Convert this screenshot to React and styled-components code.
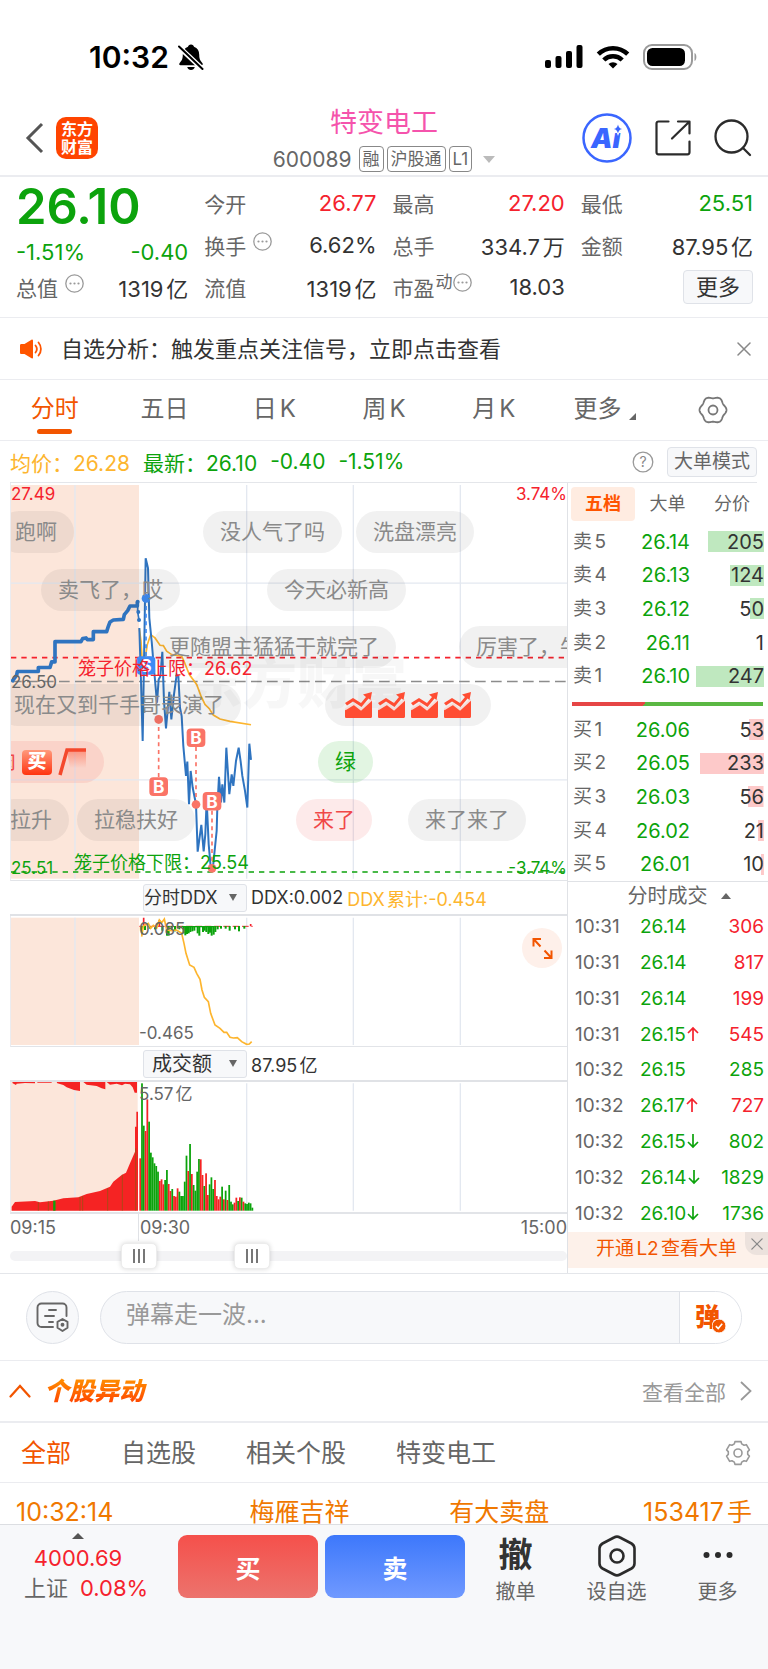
import React from "react";
import styled, { createGlobalStyle, css } from "styled-components";

const C = {
  green: "#0ca30c",
  red: "#f5222d",
  orange: "#f25500",
  amber: "#fdb52e",
  text: "#333333",
  mid: "#666666",
  soft: "#999999",
  line: "#ebecf0",
  panel: "#f7f8fa",
  blue: "#2f74c0",
  peach: "#fce6da",
};

const tone = (t) => C[t] || C.text;

const Global = createGlobalStyle`
  *, *::before, *::after { box-sizing: border-box; }
  html, body { margin: 0; padding: 0; background: #fff; }
  body {
    font-family: Inter, "Noto Sans CJK SC", sans-serif;
    font-size: 20px;
    color: ${C.text};
    text-autospace: normal;
  }
  button, input, select { font-family: inherit; color: inherit; }
  button { border: 0; padding: 0; background: none; cursor: pointer; }
  svg { display: block; flex: none; }
  a { text-decoration: none; color: inherit; }
`;

const Page = styled.main`
  width: 100%;
  overflow: hidden;
`;

/* ---------- status bar ---------- */
const StatusBar = styled.div`
  display: flex;
  align-items: center;
  justify-content: space-between;
  height: 96px;
  padding: 18px 70px 0 89px;
`;
const StatusSide = styled.div`
  display: flex;
  align-items: center;
  gap: ${(p) => p.$gap}px;
`;
const Clock = styled.time`
  font-size: 30px;
  font-weight: 600;
  line-height: 36px;
  color: #000;
`;

/* ---------- header ---------- */
const Header = styled.header`
  display: grid;
  grid-template-columns: 1fr auto 1fr;
  align-items: center;
  height: 81px;
  padding: 2px 16px 0;
  border-bottom: 2px solid ${C.line};
`;
const HeaderLeft = styled.div`
  display: flex;
  align-items: center;
  gap: 12px;
  padding-left: 9px;
`;
const IconButton = styled.button`
  display: grid;
  place-items: center;
`;
const Logo = styled.a`
  display: grid;
  place-items: center;
  width: 42px;
  height: 42px;
  border-radius: 10px;
  background: #ff4400;
  color: #fff;
  font-size: 16px;
  font-weight: 700;
  line-height: 18px;
  text-align: center;
`;
const TitleBlock = styled.div`
  display: flex;
  flex-direction: column;
  align-items: center;
  padding-top: 7px;
`;
const StockName = styled.h1`
  margin: 0;
  font-size: 27px;
  font-weight: 400;
  line-height: 36px;
  color: #f553ac;
`;
const CodeLine = styled.div`
  display: flex;
  align-items: center;
  gap: 3px;
  height: 36px;
  font-size: 21px;
  color: ${C.mid};
`;
const Code = styled.span`
  margin-right: 4px;
`;
const Badge = styled.span`
  height: 26px;
  padding: 0 3px;
  border: 1px solid #888;
  border-radius: 4px;
  font-size: 17px;
  line-height: 24px;
`;
const Triangle = styled.i`
  display: inline-block;
  margin: ${(p) => p.$m || "0"};
  border: ${(p) => p.$w}px solid transparent;
  ${(p) =>
    p.$up
      ? css`border-top: 0; border-bottom: ${p.$h}px solid ${p.$c};`
      : css`border-bottom: 0; border-top: ${p.$h}px solid ${p.$c};`}
`;
const HeaderRight = styled.div`
  display: flex;
  align-items: center;
  justify-content: flex-end;
  gap: 23px;
`;

/* ---------- quote ---------- */
const Quote = styled.section`
  display: grid;
  grid-template-columns: repeat(4, 1fr);
  column-gap: 16px;
  padding: 5px 15px 9px 16px;
  border-bottom: 1px solid ${C.line};
`;
const QuoteCol = styled.dl`
  margin: 0;
`;
const Price = styled.div`
  height: 50px;
  font-size: 49px;
  font-weight: 600;
  line-height: 50px;
  color: ${C.green};
`;
const Change = styled.div`
  display: flex;
  align-items: flex-end;
  justify-content: space-between;
  height: 34px;
  font-size: 22px;
  line-height: 28px;
  color: ${C.green};
`;
const Stat = styled.div`
  display: flex;
  align-items: center;
  justify-content: space-between;
  height: 42px;
`;
const StatLabel = styled.dt`
  display: flex;
  align-items: center;
  gap: 7px;
  font-size: 21px;
  color: ${C.mid};
  white-space: nowrap;
`;
const StatValue = styled.dd`
  margin: 0;
  font-size: 22px;
  color: ${(p) => tone(p.$tone)};
  white-space: nowrap;
`;
const Raised = styled.span`
  display: flex;
  align-items: center;
  margin-left: -6px;
  padding-bottom: 10px;
  font-size: 17px;
  line-height: 18px;
`;
const RaisedDots = styled.span`
  padding-bottom: 8px;
`;
const SmallButton = styled.button`
  width: ${(p) => p.$w}px;
  height: ${(p) => p.$h}px;
  border: 1px solid #dfe2e8;
  border-radius: 4px;
  background: ${C.panel};
  font-size: ${(p) => p.$size}px;
  line-height: 28px;
  color: ${(p) => p.$c || C.text};
`;

/* ---------- notice ---------- */
const Notice = styled.section`
  display: flex;
  align-items: center;
  height: 62px;
  padding: 0 17px 0 19px;
  border-bottom: 1px solid ${C.line};
`;
const NoticeText = styled.p`
  flex: 1;
  margin: 0 0 0 18px;
  font-size: 22px;
  line-height: 30px;
`;

/* ---------- period tabs ---------- */
const Periods = styled.nav`
  display: grid;
  grid-template-columns: repeat(7, 1fr);
  height: 61px;
  border-bottom: 1px solid ${C.line};
`;
const Period = styled.button`
  display: flex;
  flex-direction: column;
  align-items: center;
  padding-top: 11px;
  font-size: 24px;
  line-height: 36px;
  color: ${(p) => (p.$on ? C.orange : C.mid)};
  &::after {
    content: "";
    width: 35px;
    height: 5px;
    margin-top: 2px;
    border-radius: 3px;
    background: ${(p) => (p.$on ? C.orange : "transparent")};
  }
`;
const MorePeriod = styled.span`
  display: flex;
  align-items: flex-end;
  gap: 8px;
  padding-left: 4px;
`;

/* ---------- price summary ---------- */
const Summary = styled.div`
  display: flex;
  align-items: center;
  height: 42px;
  margin: 0 11px 0 10px;
  border-bottom: 1px solid #e4e6ea;
`;
const SummaryItem = styled.span`
  margin-right: 13px;
  font-size: 21px;
  color: ${(p) => tone(p.$tone)};
  white-space: nowrap;
`;
const Spacer = styled.span`
  flex: 1;
`;

/* ---------- chart board ---------- */
const Board = styled.section`
  display: flex;
  padding-left: 10px;
  border-bottom: 1px solid #e4e6ea;
`;
const Charts = styled.div`
  flex: 1;
  min-width: 0;
`;
const Plot = styled.div`
  position: relative;
  height: ${(p) => p.$h}px;
  overflow: hidden;
  border-left: 1px solid ${C.line};
  border-bottom: ${(p) => p.$b || 1}px solid #e2e4e8;
`;
const Canvas = styled.svg`
  width: 100%;
  height: 100%;
`;
const AxisMark = styled.span`
  position: absolute;
  left: ${(p) => (p.$right ? "auto" : `${p.$x || 0}px`)};
  right: ${(p) => (p.$right ? "0" : "auto")};
  top: ${(p) => p.$y}px;
  font-size: ${(p) => p.$size || 17}px;
  line-height: 24px;
  color: ${(p) => tone(p.$tone)};
  white-space: nowrap;
`;
const Watermark = styled.span`
  position: absolute;
  left: 176px;
  top: 160px;
  font-size: 55px;
  font-weight: 900;
  line-height: 80px;
  color: rgba(0, 0, 0, 0.03);
`;
const bulletTones = {
  grey: ["rgba(60,60,60,.07)", "#8a8a8a"],
  red: ["rgba(240,60,60,.11)", "#f04848"],
  green: ["rgba(20,170,20,.12)", C.green],
};
const Bullet = styled.span`
  position: absolute;
  left: ${(p) => p.$x}px;
  top: ${(p) => p.$y}px;
  display: flex;
  align-items: center;
  gap: 6px;
  height: 42px;
  padding: 0 17px;
  border-radius: 21px;
  background: ${(p) => bulletTones[p.$tone][0]};
  color: ${(p) => bulletTones[p.$tone][1]};
  font-size: 20px;
  line-height: 42px;
  white-space: nowrap;
`;
const TextBullet = styled(Bullet)`
  font-size: 21px;
`;
const StickerBullet = styled(Bullet)`
  padding: 0 20px;
`;
const BuySticker = styled.b`
  width: 30px;
  height: 25px;
  border-radius: 4px;
  background: linear-gradient(#ff9a7c, #ff3410);
  color: #fff;
  font-size: 19px;
  font-weight: 900;
  line-height: 24px;
  text-align: center;
`;
const IndicatorBar = styled.div`
  display: flex;
  align-items: center;
  gap: 4px;
  height: ${(p) => p.$h}px;
  padding-left: 133px;
  border-bottom: 2px solid #e0e2e6;
  font-size: 18px;
  white-space: nowrap;
`;
const IndicatorSelect = styled.select`
  width: 104px;
  height: 28px;
  padding: 0 20px 0 ${(p) => p.$pad}px;
  border: 1px solid #dfe2e8;
  border-radius: 3px;
  appearance: none;
  background: ${C.panel}
    url("data:image/svg+xml,%3Csvg xmlns='http://www.w3.org/2000/svg' width='8' height='7'%3E%3Cpath d='M0 0h8L4 7z' fill='%23666'/%3E%3C/svg%3E")
    no-repeat right 9px center;
  font-size: ${(p) => p.$size}px;
`;
const Tinted = styled.span`
  color: ${(p) => tone(p.$tone)};
`;
const ExpandButton = styled.button`
  position: absolute;
  right: 5px;
  top: 12px;
  display: grid;
  place-items: center;
  width: 40px;
  height: 40px;
  border-radius: 50%;
  background: #fef0ea;
`;
const TimeAxis = styled.div`
  display: grid;
  grid-template-columns: 128px 1fr auto;
  height: 25px;
  font-size: 18px;
  line-height: 27px;
  color: ${C.mid};
`;
const TickLabel = styled.span`
  padding-left: ${(p) => (p.$tick ? 1 : 0)}px;
  border-left: ${(p) => (p.$tick ? 1 : 0)}px solid #e0e2e6;
`;
const RangeBox = styled.div`
  position: relative;
  height: 34px;
  &::before {
    content: "";
    position: absolute;
    left: 0;
    right: 0;
    top: 12px;
    height: 10px;
    border-radius: 5px;
    background: #f3f3f5;
  }
`;
const thumb = css`
  appearance: none;
  width: 36px;
  height: 26px;
  border: 1px solid #ececec;
  border-radius: 5px;
  background:
    linear-gradient(#777, #777) 11px 5px / 2px 14px no-repeat,
    linear-gradient(#777, #777) 16px 5px / 2px 14px no-repeat,
    linear-gradient(#777, #777) 21px 5px / 2px 14px no-repeat,
    #fff;
  box-shadow: 0 0 5px rgba(0, 0, 0, 0.16);
  pointer-events: auto;
`;
const RangeInput = styled.input`
  position: absolute;
  left: 0;
  top: 0;
  width: 100%;
  height: 34px;
  margin: 0;
  appearance: none;
  background: transparent;
  pointer-events: none;
  &::-webkit-slider-thumb { ${thumb} }
`;

/* ---------- order book ---------- */
const Side = styled.aside`
  width: 201px;
  border-left: 1px solid #e0e2e6;
`;
const BookTabs = styled.div`
  display: grid;
  grid-template-columns: 64px 65px 64px;
  height: 42px;
  padding: 4px 0 4px 3px;
`;
const BookTab = styled.button`
  border-radius: 4px;
  background: ${(p) => (p.$on ? "#ffece1" : "none")};
  color: ${(p) => (p.$on ? "#ff5500" : C.mid)};
  font-size: 18px;
  font-weight: ${(p) => (p.$on ? 700 : 400)};
  line-height: 34px;
`;
const BookTable = styled.table`
  width: 196px;
  height: ${(p) => p.$h}px;
  border-collapse: collapse;
  table-layout: fixed;
  td, th { padding: 0; line-height: 24px; }
`;
const Level = styled.th`
  width: 52px;
  text-align: left;
  font-size: 19px;
  font-weight: 400;
  color: ${C.mid};
  && { padding-left: 5px; }
`;
const BookPrice = styled.td`
  text-align: right;
  font-size: 20px;
  color: ${C.green};
`;
const Volume = styled.td`
  width: 74px;
  text-align: right;
  font-size: 20px;
  color: ${C.text};
  background: linear-gradient(${(p) => p.$fill}, ${(p) => p.$fill}) right center / ${(p) => p.$w}% 21px no-repeat;
`;
const Balance = styled.div`
  height: 4px;
  margin: 9px 5px 7px 4px;
  background: linear-gradient(120deg, #e64545 38%, #5bb843 38%);
`;
const DealsHead = styled.h2`
  display: flex;
  align-items: center;
  justify-content: center;
  gap: 13px;
  height: 28px;
  margin: 0;
  padding-left: 22px;
  border-top: 1px solid #e0e2e6;
  font-size: 20px;
  font-weight: 400;
  line-height: 26px;
  color: ${C.mid};
`;
const DealTime = styled.td`
  width: 72px;
  font-size: 19px;
  color: ${C.mid};
  && { padding-left: 7px; }
`;
const DealPrice = styled.td`
  font-size: 19px;
  color: ${C.green};
  white-space: nowrap;
  svg { display: inline-block; vertical-align: -1px; }
`;
const DealVolume = styled.td`
  width: 54px;
  text-align: right;
  font-size: 19px;
  color: ${(p) => tone(p.$tone)};
`;
const Promo = styled.div`
  display: flex;
  height: 36px;
  margin-bottom: 5px;
  background: #fdf1ea;
`;
const PromoLink = styled.a`
  flex: 1;
  padding-left: 28px;
  font-size: 19px;
  line-height: 34px;
  color: ${C.orange};
  white-space: nowrap;
`;
const PromoClose = styled.button`
  display: grid;
  place-items: center;
  width: 23px;
  height: 23px;
  border-bottom-left-radius: 12px;
  background: #ece2dd;
`;

/* ---------- composer ---------- */
const Composer = styled.form`
  display: flex;
  align-items: center;
  gap: 21px;
  height: 87px;
  padding: 0 26px;
  border-bottom: 1px solid ${C.line};
`;
const RoundButton = styled.button`
  display: grid;
  place-items: center;
  width: 53px;
  height: 53px;
  border: 1px solid #dfe2e8;
  border-radius: 50%;
  background: ${C.panel};
`;
const Field = styled.div`
  display: flex;
  flex: 1;
  height: 53px;
  overflow: hidden;
  border: 1px solid #dfe2e8;
  border-radius: 27px;
  background: ${C.panel};
`;
const FieldInput = styled.input`
  flex: 1;
  min-width: 0;
  padding: 0 25px 5px;
  border: 0;
  outline: 0;
  background: none;
  font-size: 24px;
  &::placeholder { color: #999; opacity: 1; }
`;
const SendButton = styled.button`
  position: relative;
  width: 62px;
  padding-right: 6px;
  border-left: 1px solid #dfe2e8;
  background: #fff;
  color: ${C.orange};
  font-size: 25px;
  font-weight: 900;
  line-height: 48px;
`;
const SendMark = styled.svg`
  position: absolute;
  left: 32px;
  top: 27px;
`;

/* ---------- movers ---------- */
const SectionHead = styled.div`
  display: flex;
  align-items: center;
  height: 62px;
  padding: 0 16px 0 9px;
  border-bottom: 2px solid ${C.line};
`;
const SectionTitle = styled.h2`
  margin: 0 0 0 13px;
  padding-right: 4px;
  font-size: 25px;
  font-weight: 900;
  font-style: italic;
  line-height: 34px;
  background: linear-gradient(#ff8a00 20%, #ff4a00 80%);
  background-clip: text;
  color: transparent;
`;
const SeeAll = styled.a`
  display: flex;
  align-items: center;
  gap: 14px;
  margin-left: auto;
  font-size: 21px;
  color: ${C.soft};
`;
const Filters = styled.nav`
  display: flex;
  align-items: center;
  gap: 50px;
  height: 60px;
  padding: 0 17px 0 21px;
  border-bottom: 1px solid ${C.line};
`;
const Filter = styled.button`
  font-size: 25px;
  line-height: 36px;
  color: ${(p) => (p.$on ? C.orange : C.mid)};
`;
const GearButton = styled(IconButton)`
  margin-left: auto;
`;
const MoversBox = styled.div`
  height: 41px;
  overflow: hidden;
`;
const Movers = styled.table`
  width: 100%;
  border-collapse: collapse;
  table-layout: fixed;
  color: #f07800;
  font-size: 25px;
  td { width: 26%; padding: 9px 0 0; line-height: 40px; text-align: center; }
  td:first-child { padding-left: 16px; text-align: left; }
  td:last-child { width: 22%; padding-right: 16px; text-align: right; }
`;

/* ---------- trade bar ---------- */
const TradeBar = styled.footer`
  display: grid;
  grid-template-columns: 178px 1fr 101px 101px 101px;
  height: 145px;
  border-top: 1px solid #dcdee2;
  background: ${C.panel};
`;
const IndexBox = styled.div`
  display: flex;
  flex-direction: column;
  align-items: center;
  width: 156px;
  padding-top: 8px;
  font-size: 22px;
  line-height: 30px;
  color: ${C.red};
`;
const IndexLine = styled.span`
  display: flex;
  gap: 12px;
  padding-left: 16px;
`;
const IndexValue = styled.span`
  padding-top: 4px;
`;
const TradeButtons = styled.div`
  display: flex;
  gap: 7px;
  padding-top: 10px;
`;
const TradeButton = styled.button`
  flex: 1;
  height: 63px;
  border-radius: 9px;
  background: ${(p) =>
    p.$sell ? "linear-gradient(#3d78fb, #7099ff)" : "linear-gradient(#f5504b, #ec736d)"};
  color: #fff;
  font-size: 25px;
  font-weight: 600;
`;
const Tool = styled.button`
  display: flex;
  flex-direction: column;
  align-items: center;
  justify-content: flex-start;
  padding-top: 10px;
  font-size: 20px;
  line-height: 30px;
  color: ${C.mid};
`;
const ToolIcon = styled.span`
  display: grid;
  place-items: center;
  height: 40px;
  margin-bottom: 2px;
  font-size: 34px;
  font-weight: 600;
  line-height: 38px;
  color: ${C.text};
`;

/* ---------- icons ---------- */
const polar = (c, r, deg) => {
  const a = (deg * Math.PI) / 180;
  return `${(c + r * Math.cos(a)).toFixed(2)} ${(c + r * Math.sin(a)).toFixed(2)}`;
};
const scallop =
  "M" +
  Array.from({ length: 120 }, (_, i) =>
    polar(15, 12.6 + 0.9 * Math.cos((i * 3 * 6 * Math.PI) / 180), i * 3)
  ).join("L") +
  "Z";
const cog =
  "M" +
  Array.from({ length: 6 }, (_, k) => {
    const t = 30 + k * 60;
    return [[9.8, -22], [11.8, -15], [11.8, 15], [9.8, 22]]
      .map(([r, d]) => polar(13, r, t + d))
      .join("L");
  }).join("L") +
  "Z";

const BellOff = () => (
  <svg width="26" height="28" viewBox="0 0 26 28">
    <path
      d="M13 1.5c-1.7 0-2.8 1-3 2.3C6.400 5 4.800 8 4.800 11.500c0 5.500-1.800 6.800-3.300 8.800-.6 1-.1 2 1 2h21c1.100 0 1.600-1 1-2-1.500-2-3.300-3.300-3.300-8.800C21.200 8 19.600 5 16 3.800 15.800 2.500 14.700 1.500 13 1.500Z M9.200 24h7.600c-.5 2-2 3-3.800 3s-3.300-1-3.800-3Z"
      fill="#000"
    />
    <path d="M.5 3.500 25 26.500" stroke="#fff" strokeWidth="5" />
    <path d="M1 3.500 24.500 26" stroke="#000" strokeWidth="2" strokeLinecap="round" />
  </svg>
);
const Signal = () => (
  <svg width="38" height="24" viewBox="0 0 38 24">
    <rect x="0" y="15" width="6" height="8" rx="2" />
    <rect x="10.500" y="11" width="6" height="12" rx="2" />
    <rect x="21" y="6" width="6" height="17" rx="2" />
    <rect x="31.500" y="0" width="6" height="23" rx="2" />
  </svg>
);
const Wifi = () => (
  <svg width="34" height="24" viewBox="0 0 34 24" fill="none" stroke="#000" strokeWidth="4.500">
    <path d="M2.300 9.200a21 21 0 0 1 29.400 0" />
    <path d="M7.800 15a13.200 13.200 0 0 1 18.400 0" />
    <path d="M17 23.500l-4.500-4.600a6.600 6.600 0 0 1 9 0Z" fill="#000" stroke="none" />
  </svg>
);
const Battery = () => (
  <svg width="55" height="26" viewBox="0 0 55 26">
    <rect x="1" y="1" width="48" height="24" rx="8" fill="none" stroke="#9a9a9a" strokeWidth="2" />
    <rect x="4" y="4" width="38" height="18" rx="5.500" />
    <path d="M51.500 9c2.500.7 2.500 7.300 0 8Z" fill="#9a9a9a" />
  </svg>
);
const BackIcon = () => (
  <svg width="19" height="32" viewBox="0 0 19 32" fill="none" stroke="#555" strokeWidth="3">
    <path d="M17 2 3 16l14 14" />
  </svg>
);
const AiIcon = () => (
  <svg width="50" height="50" viewBox="0 0 50 50">
    <circle cx="25" cy="25" r="23.500" fill="none" stroke="#3a66ff" strokeWidth="2.500" />
    <text x="9" y="35" fontSize="27" fontWeight="900" fontStyle="italic" fill="#3a66ff">
      Ai
    </text>
    <path d="M36 9c1.500 4.500 2.500 5.500 7 7-4.500 1.500-5.500 2.500-7 7-1.500-4.500-2.500-5.500-7-7 4.500-1.500 5.500-2.500 7-7Z" fill="#fff" />
    <path d="M36 11.500c.8 3 1.500 3.700 4.200 4.500-2.700.8-3.400 1.500-4.200 4.500-.8-3-1.500-3.700-4.200-4.500 2.700-.8 3.400-1.500 4.200-4.500Z" fill="#3a66ff" />
  </svg>
);
const ShareIcon = () => (
  <svg width="36" height="36" viewBox="0 0 36 36" fill="none" stroke="#2b2b2b" strokeWidth="2.200" strokeLinecap="round" strokeLinejoin="round">
    <path d="M13.500 1.500h-10a2 2 0 0 0-2 2v28.800a2 2 0 0 0 2 2h29a2 2 0 0 0 2-2V21.500" />
    <path d="M23 1.500h11.500V13.500M34 2 17 18.500" />
  </svg>
);
const SearchIcon = () => (
  <svg width="38" height="38" viewBox="0 0 38 38" fill="none" stroke="#2b2b2b" strokeWidth="2.300" strokeLinecap="round">
    <circle cx="17.500" cy="17.500" r="16" />
    <path d="M29 29l7 7" />
  </svg>
);
const DotsIcon = () => (
  <svg width="19" height="19" viewBox="0 0 19 19" fill="#999">
    <circle cx="9.500" cy="9.500" r="8.700" fill="none" stroke="#999" strokeWidth="1.300" />
    <circle cx="5.500" cy="9.500" r="1.100" />
    <circle cx="9.500" cy="9.500" r="1.100" />
    <circle cx="13.500" cy="9.500" r="1.100" />
  </svg>
);
const Speaker = () => (
  <svg width="24" height="20" viewBox="0 0 24 20">
    <path d="M1 6.500c0-1 .5-1.500 1.500-1.500h3L12.500.7c.8-.4 1.500 0 1.500.9v16.800c0 .9-.7 1.300-1.500.9L5.500 15h-3C1.500 15 1 14.500 1 13.500Z" fill="#ff5500" />
    <path d="M16.500 6.500c1.600 2 1.600 5 0 7M19.500 3.500c3.200 3.700 3.200 9.300 0 13" fill="none" stroke="#ff5500" strokeWidth="1.800" strokeLinecap="round" />
  </svg>
);
const Cross = ({ size = 14, color = "#888" }) => (
  <svg width={size} height={size} viewBox="0 0 14 14" stroke={color} strokeWidth="1.500" strokeLinecap="round">
    <path d="M1 1l12 12M13 1 1 13" />
  </svg>
);
const PeriodGear = () => (
  <svg width="30" height="30" viewBox="0 0 30 30" fill="none" stroke="#777" strokeWidth="1.800">
    <path d={scallop} />
    <circle cx="15" cy="15" r="4.500" />
  </svg>
);
const CogIcon = () => (
  <svg width="26" height="26" viewBox="0 0 26 26" fill="none" stroke="#999" strokeWidth="1.600" strokeLinejoin="round">
    <path d={cog} />
    <circle cx="13" cy="13" r="4" />
  </svg>
);
const HelpIcon = () => (
  <svg width="22" height="22" viewBox="0 0 22 22">
    <circle cx="11" cy="11" r="9.800" fill="none" stroke="#999" strokeWidth="1.300" />
    <text x="11" y="16" fontSize="14" textAnchor="middle" fill="#888">?</text>
  </svg>
);
const TrendSticker = () => (
  <svg width="27" height="26" viewBox="0 0 27 26" fill="#ff4d33">
    <path d="M0 17.500l9-5.500 7 5.500 11-10V24.500c0 .8-.5 1.500-1.500 1.500h-24C.5 26 0 25.500 0 24.500Z" />
    <path d="M0 17.500l9-5.500 7 5.500L27 7.500" fill="none" stroke="#f7dcd8" strokeWidth="2" />
    <path d="M0 11l8-5 8 5 5-6-3-2.500L27 0l-1.500 8L23.500 6.500 16.500 15 8 9.500 2 13.500Z" />
  </svg>
);
const SlashSticker = () => (
  <svg width="29" height="28" viewBox="0 0 29 28">
    <defs>
      <linearGradient id="slashFade" x1="0" y1="0" x2="0" y2="1">
        <stop offset="0" stopColor="#ff5a3c" stopOpacity=".5" />
        <stop offset="1" stopColor="#ff5a3c" stopOpacity="0" />
      </linearGradient>
    </defs>
    <path d="M9 3h19v17H12Z" fill="url(#slashFade)" />
    <path d="M2 27 9 2h19" fill="none" stroke="#f4482c" strokeWidth="3.500" />
  </svg>
);
const Arrow = ({ up }) => (
  <svg width="14" height="16" viewBox="0 0 14 16" fill="none" stroke={up ? C.red : C.green} strokeWidth="1.700">
    <path d={up ? "M7 15V2M2 7l5-5 5 5" : "M7 1v13M2 9l5 5 5-5"} />
  </svg>
);
const ExpandIcon = () => (
  <svg width="21" height="21" viewBox="0 0 21 21" fill="none" stroke={C.orange} strokeWidth="2">
    <path d="M9 1H1.500V8.500M2 1.500 8.500 8.500M12 20h7.500V12.500M19 19.500 12.500 12.500" />
  </svg>
);
const NoteIcon = () => (
  <svg width="33" height="31" viewBox="0 0 33 31" fill="none" stroke="#666" strokeWidth="1.900" strokeLinecap="round" strokeLinejoin="round">
    <path d="M17 25H5.500a4 4 0 0 1-4-4V5.500a4 4 0 0 1 4-4h21a4 4 0 0 1 4 4V14" />
    <path d="M13 8h7M9 14h9M13 20h4" />
    <path d="M26.500 17l5 2.800v6L26.500 29l-5-3.200v-6Z" />
    <circle cx="26.500" cy="22.800" r="1" fill="#666" />
  </svg>
);
const ChevronUp = () => (
  <svg width="22" height="14" viewBox="0 0 22 14" fill="none" stroke={C.orange} strokeWidth="2.200" strokeLinecap="round">
    <path d="M1.500 12.500 11 2l9.500 10.500" />
  </svg>
);
const ChevronRight = () => (
  <svg width="12" height="20" viewBox="0 0 12 20" fill="none" stroke="#999" strokeWidth="1.800">
    <path d="M1 1l9.500 9L1 19" />
  </svg>
);
const HexIcon = () => (
  <svg width="38" height="42" viewBox="0 0 38 42" fill="none" stroke="#2b2b2b" strokeWidth="2.600" strokeLinejoin="round">
    <path d="M16 2.500a6 6 0 0 1 6 0L33.500 8.500a6 6 0 0 1 3 5V28.500a6 6 0 0 1-3 5L22 39.500a6 6 0 0 1-6 0L4.500 33.500a6 6 0 0 1-3-5V13.500a6 6 0 0 1 3-5Z" />
    <circle cx="19" cy="21" r="6.500" />
  </svg>
);
const EllipsisIcon = () => (
  <svg width="30" height="8" viewBox="0 0 30 8" fill="#2b2b2b">
    <circle cx="3.500" cy="4" r="3" />
    <circle cx="15" cy="4" r="3" />
    <circle cx="26.500" cy="4" r="3" />
  </svg>
);

/* ---------- chart drawings (three units per pixel) ---------- */
const gridX = [225, 740, 1060, 1381];
const auctionLine =
  "35,622 50,602 52,591 115,591 115,579 150,579 155,562 165,562 165,501 243,501 248,492 258,490 262,495 280,495 280,471 320,471 325,455 330,442 340,436 370,434 373,420 383,408 390,394 412,394 412,381";
const priceLine =
  "418,460 423,620 428,800 433,500 437,250 444,280 448,430 455,500 460,560 471,685 476,615 481,605 487,532 492,680 498,762 508,652 514,735 522,660 530,600 535,604 540,700 545,725 550,815 558,905 562,862 567,990 572,890 578,940 588,990 593,1133 604,1052 611,1132 616,1080 620,978 626,1110 633,1190 638,1188 650,1070 652,1000 657,908 663,985 667,930 673,985 679,820 688,960 695,900 700,935 708,860 716,820 722,862 727,905 735,950 742,1000 748,808 753,857";
const averageLine =
  "418,462 423,500 428,580 434,560 442,510 452,480 465,490 480,512 490,513 500,530 515,540 545,545 552,560 568,600 590,630 603,665 615,690 628,703 640,722 660,734 690,741 753,751";
const trades = [
  { k: "S", x: 438, dot: 371, box: 573 },
  { k: "B", x: 476, dot: 735, box: 937 },
  { k: "B", x: 588, dot: 991, box: 790 },
  { k: "B", x: 636, dot: 1183, box: 981 },
];

const Grid = ({ top, bottom, rows = [] }) => (
  <g stroke="#e3e8f0" strokeWidth="4">
    {gridX.map((x) => (
      <path key={x} d={`M${x} ${top}V${bottom}`} />
    ))}
    {rows.map((y) => (
      <path key={y} d={`M33 ${y}H1701`} />
    ))}
  </g>
);

const PriceCanvas = () => (
  <Canvas viewBox="33 24 1668 1194" preserveAspectRatio="none" aria-hidden="true">
    <rect x="33" y="30" width="384" height="1184" fill={C.peach} />
    <Grid top={30} bottom={1214} rows={[325, 917]} />
    <g fill="none" strokeWidth="5">
      <path d="M33 549H1701" stroke={C.red} strokeDasharray="16 15" />
      <path d="M33 621H1701" stroke="#8c8c8c" strokeDasharray="32 16" />
      <path d="M33 1194H1701" stroke={C.green} strokeDasharray="16 15" />
      <polyline points={averageLine} stroke={C.amber} />
      <polyline points={priceLine} stroke={C.blue} strokeWidth="6" />
      <polyline points={auctionLine} stroke={C.blue} strokeWidth="11" strokeLinejoin="round" />
      <path d="M413 381V412L417 436" stroke={C.blue} strokeWidth="5" />
    </g>
    <g fill={C.blue}>
      <circle cx="413" cy="381" r="6" />
      <circle cx="415" cy="412" r="6" />
      <circle cx="417" cy="436" r="6" />
    </g>
    {trades.map((t) => {
      const c = t.k === "S" ? "#3d8bf5" : "#fa7467";
      return (
        <g key={t.x}>
          <path d={`M${t.x} ${t.dot}V${t.box}`} stroke={c} strokeWidth="5" strokeDasharray="12 11" />
          <circle cx={t.x} cy={t.dot} r="13" fill={c} />
          <rect x={t.x - 28} y={t.box - 28} width="56" height="56" rx="12" fill={c} />
          <text x={t.x} y={t.box + 19} fontSize="52" fontWeight="700" textAnchor="middle" fill="#fff">
            {t.k}
          </text>
        </g>
      );
    })}
  </Canvas>
);

const ddxBars = [
  [423, 195], [432, 180], [446, 176], [462, 178], [484, 182], [498, 220], [503, 205], [512, 180], [522, 184],
  [535, 178], [548, 190], [553, 196], [558, 192], [563, 190], [568, 186], [574, 184], [580, 182], [590, 190],
  [595, 197], [606, 186], [611, 182], [616, 186], [622, 192], [627, 188], [632, 197], [638, 194], [643, 186],
  [650, 178], [660, 176], [674, 176], [686, 182], [702, 178], [714, 184], [730, 176],
];
const ddxLine =
  "425,200 430,168 437,164 445,160 452,175 460,166 470,174 478,150 485,158 493,147 500,180 515,182 530,180 545,190 552,220 558,250 569,285 582,292 590,310 600,328 606,360 613,382 625,395 632,430 645,465 660,475 672,487 680,487 690,502 700,504 712,503 725,515 740,523 748,522 755,515";

const DdxCanvas = () => (
  <Canvas viewBox="33 138 1668 390" preserveAspectRatio="none" aria-hidden="true">
    <rect x="33" y="143" width="384" height="382" fill={C.peach} />
    <Grid top={143} bottom={525} />
    <path d="M418 169H758" stroke={C.red} strokeWidth="3" strokeDasharray="20 8" />
    <path d="M431 169V143M478 169V150M752 169V162" stroke={C.red} strokeWidth="5" />
    <path d="M545 170H640" stroke={C.green} strokeWidth="4" />
    {ddxBars.map(([x, y]) => (
      <rect key={x} x={x} y="168" width="6" height={Math.min(y, 197) - 168} fill={C.green} />
    ))}
    <polyline points={ddxLine} fill="none" stroke={C.amber} strokeWidth="5" />
  </Canvas>
);

const volumeTops =
  "r865 g640 g767 r783 r688 g755 g848 g862 g880 g888 g905 r933 r928 r943 g930 g900 r942 r963 g957 r978 r980 r955 g965 g978 g978 g935 g857 r903 g822 r912 g945 g962 g905 g867 r868 r915 g948 r910 r975 g943 g922 g957 r930 r978 r988 r980 g950 r988 g962 r990 g945 g995 g1003 r998 r983 g993 r982 g983 r995 g1000 g1002 g998 g1000 g1013".split(
    " "
  );

const VolumeCanvas = () => (
  <Canvas viewBox="33 636 1668 390" preserveAspectRatio="none" aria-hidden="true">
    <rect x="33" y="636" width="380" height="386" fill={C.peach} />
    <Grid top={640} bottom={1022} />
    <g fill="#f52323">
      <path d="M35 1022V1010L45 996 105 993 120 997 160 992 190 985 235 982 260 972 300 963 330 950 340 935 365 915 378 908 390 880 405 845V770H409V725H414V1022Z" />
      <path d="M37 636H105V640L75 639 50 641 48 645 38 640ZM112 636H155V638H112ZM170 636H240V663L222 660 200 652 190 645 172 640ZM250 636H316V658L305 655 290 648 260 644ZM320 636H411V668H404L398 652 390 643 375 641 366 646 350 641 330 644Z" />
    </g>
    <path d="M115 997V1022M145 994V1022M240 981V1022M248 978V1022M323 955V1022M367 914V1022M407 835V1022" stroke="#8a5a10" strokeWidth="2" />
    <path d="M163 992V1022" stroke={C.green} strokeWidth="7" />
    {volumeTops.map((v, i) => {
      const y = Number(v.slice(1));
      return (
        <rect
          key={i}
          x={418 + (i * 534) / 100}
          y={y}
          width="5.300"
          height={1022 - y}
          fill={v[0] === "r" ? "#f52323" : C.green}
        />
      );
    })}
  </Canvas>
);

/* ---------- data ---------- */
const statColumns = [
  [
    { l: "今开", v: "26.77", t: "red" },
    { l: "换手", v: "6.62%", dots: true },
    { l: "流值", v: "1319亿" },
  ],
  [
    { l: "最高", v: "27.20", t: "red" },
    { l: "总手", v: "334.7万" },
    { l: "市盈", v: "18.03", sup: "动" },
  ],
  [
    { l: "最低", v: "25.51", t: "green" },
    { l: "金额", v: "87.95亿" },
  ],
];
const bullets = [
  ["跑啊", -13, 28, "grey"],
  ["没人气了吗", 192, 28, "grey"],
  ["洗盘漂亮", 345, 28, "grey"],
  ["卖飞了，哎", 30, 86, "grey"],
  ["今天必新高", 256, 86, "grey"],
  ["更随盟主猛猛干就完了", 141, 143, "grey"],
  ["厉害了，牛", 448, 143, "grey"],
  ["现在又到千手哥表演了", -14, 201, "grey"],
  ["绿", 307, 258, "green"],
  ["拉升", -18, 316, "grey"],
  ["拉稳扶好", 66, 316, "grey"],
  ["来了", 285, 316, "red"],
  ["来了来了", 397, 316, "grey"],
];
const sells = [
  ["卖5", "26.14", 205],
  ["卖4", "26.13", 124],
  ["卖3", "26.12", 50],
  ["卖2", "26.11", 1],
  ["卖1", "26.10", 247],
];
const buys = [
  ["买1", "26.06", 53],
  ["买2", "26.05", 233],
  ["买3", "26.03", 56],
  ["买4", "26.02", 21],
  ["买5", "26.01", 10],
];
const deals = [
  ["10:31", "26.14", "", 306, "red"],
  ["10:31", "26.14", "", 817, "red"],
  ["10:31", "26.14", "", 199, "red"],
  ["10:31", "26.15", "up", 545, "red"],
  ["10:32", "26.15", "", 285, "green"],
  ["10:32", "26.17", "up", 727, "red"],
  ["10:32", "26.15", "down", 802, "green"],
  ["10:32", "26.14", "down", 1829, "green"],
  ["10:32", "26.10", "down", 1736, "green"],
];

const StatRow = ({ l, v, t, dots, sup }) => (
  <Stat>
    <StatLabel>
      {l}
      {dots && <RaisedDots><DotsIcon /></RaisedDots>}
      {sup && <Raised>{sup}<DotsIcon /></Raised>}
    </StatLabel>
    <StatValue $tone={t}>{v}</StatValue>
  </Stat>
);

const Book = ({ rows, fill, label }) => (
  <BookTable $h={168} aria-label={label}>
    <tbody>
      {rows.map(([name, price, vol]) => (
        <tr key={name}>
          <Level scope="row">{name}</Level>
          <BookPrice>{price}</BookPrice>
          <Volume $fill={fill} $w={Math.round((vol / 247) * 92)}>{vol}</Volume>
        </tr>
      ))}
    </tbody>
  </BookTable>
);

export default function App() {
  return (
    <Page>
      <Global />
      <StatusBar>
        <StatusSide $gap={9}>
          <Clock>10:32</Clock>
          <BellOff />
        </StatusSide>
        <StatusSide $gap={13}>
          <Signal />
          <Wifi />
          <Battery />
        </StatusSide>
      </StatusBar>

      <Header>
        <HeaderLeft>
          <IconButton aria-label="返回"><BackIcon /></IconButton>
          <Logo href="#">东方<br />财富</Logo>
        </HeaderLeft>
        <TitleBlock>
          <StockName>特变电工</StockName>
          <CodeLine>
            <Code>600089</Code>
            <Badge>融</Badge>
            <Badge>沪股通</Badge>
            <Badge>L1</Badge>
            <Triangle $w={6} $h={7} $c="#bbb" $m="0 0 0 8px" />
          </CodeLine>
        </TitleBlock>
        <HeaderRight>
          <IconButton aria-label="智能助手"><AiIcon /></IconButton>
          <IconButton aria-label="分享"><ShareIcon /></IconButton>
          <IconButton aria-label="搜索"><SearchIcon /></IconButton>
        </HeaderRight>
      </Header>

      <Quote>
        <div>
          <Price>26.10</Price>
          <Change><span>-1.51%</span><span>-0.40</span></Change>
          <QuoteCol><StatRow l="总值" v="1319亿" dots /></QuoteCol>
        </div>
        {statColumns.map((col, i) => (
          <div key={i}>
            <QuoteCol>
              {col.map((s) => <StatRow key={s.l} {...s} />)}
            </QuoteCol>
            {i === 2 && (
              <Stat>
                <Spacer />
                <SmallButton $w={70} $h={34} $size={22}>更多</SmallButton>
              </Stat>
            )}
          </div>
        ))}
      </Quote>

      <Notice>
        <Speaker />
        <NoticeText>自选分析：触发重点关注信号，立即点击查看</NoticeText>
        <IconButton aria-label="关闭"><Cross /></IconButton>
      </Notice>

      <Periods>
        <Period $on>分时</Period>
        <Period>五日</Period>
        <Period>日K</Period>
        <Period>周K</Period>
        <Period>月K</Period>
        <Period>
          <MorePeriod>
            更多
            <svg width="8" height="14" viewBox="0 0 8 14"><path d="M7 0v7H0Z" fill="#666" /></svg>
          </MorePeriod>
        </Period>
        <IconButton aria-label="设置"><PeriodGear /></IconButton>
      </Periods>

      <Summary>
        <SummaryItem $tone="amber">均价：26.28</SummaryItem>
        <SummaryItem $tone="green">最新：26.10</SummaryItem>
        <SummaryItem $tone="green">-0.40</SummaryItem>
        <SummaryItem $tone="green">-1.51%</SummaryItem>
        <Spacer />
        <SummaryItem><HelpIcon /></SummaryItem>
        <SmallButton $w={90} $h={30} $size={19} $c={C.mid}>大单模式</SmallButton>
      </Summary>

      <Board>
        <Charts>
          <Plot $h={398}>
            <PriceCanvas />
            <Watermark>东方财富</Watermark>
            {bullets.map(([text, x, y, t]) => (
              <TextBullet key={text} $x={x} $y={y} $tone={t}>{text}</TextBullet>
            ))}
            <StickerBullet $x={314} $y={201} $tone="grey">
              <TrendSticker /><TrendSticker /><TrendSticker /><TrendSticker />
            </StickerBullet>
            <Bullet $x={-32} $y={258} $tone="red">
              肉<BuySticker>买</BuySticker><SlashSticker />
            </Bullet>
            <AxisMark $y={-1} $tone="red">27.49</AxisMark>
            <AxisMark $y={-1} $tone="red" $right>3.74%</AxisMark>
            <AxisMark $y={187} $tone="mid">26.50</AxisMark>
            <AxisMark $y={373} $tone="green">25.51</AxisMark>
            <AxisMark $y={373} $tone="green" $right>-3.74%</AxisMark>
            <AxisMark $x={67} $y={174} $size={18} $tone="red">笼子价格上限：26.62</AxisMark>
            <AxisMark $x={63} $y={368} $size={18} $tone="green">笼子价格下限：25.54</AxisMark>
          </Plot>

          <IndicatorBar $h={35}>
            <IndicatorSelect $pad={0} $size={18} aria-label="指标一">
              <option>分时DDX</option>
            </IndicatorSelect>
            <span>DDX:0.002</span>
            <Tinted $tone="amber">DDX累计:-0.454</Tinted>
          </IndicatorBar>
          <Plot $h={131}>
            <DdxCanvas />
            <AxisMark $x={128} $y={1} $tone="mid">0.085</AxisMark>
            <AxisMark $x={128} $y={105} $tone="mid">-0.465</AxisMark>
            <ExpandButton aria-label="展开"><ExpandIcon /></ExpandButton>
          </Plot>

          <IndicatorBar $h={35}>
            <IndicatorSelect $pad={8} $size={20} aria-label="指标二">
              <option>成交额</option>
            </IndicatorSelect>
            <span>87.95亿</span>
          </IndicatorBar>
          <Plot $h={132} $b={2}>
            <VolumeCanvas />
            <AxisMark $x={128} $y={0} $tone="mid">5.57亿</AxisMark>
          </Plot>
          <TimeAxis>
            <TickLabel>09:15</TickLabel>
            <TickLabel $tick>09:30</TickLabel>
            <TickLabel>15:00</TickLabel>
          </TimeAxis>
          <RangeBox>
            <RangeInput type="range" min="0" max="1000" defaultValue="214" aria-label="起始时间" />
            <RangeInput type="range" min="0" max="1000" defaultValue="430" aria-label="结束时间" />
          </RangeBox>
        </Charts>

        <Side>
          <BookTabs>
            <BookTab $on>五档</BookTab>
            <BookTab>大单</BookTab>
            <BookTab>分价</BookTab>
          </BookTabs>
          <Book rows={sells} fill="#bfe8bf" label="卖盘" />
          <Balance />
          <Book rows={buys} fill="#fdc9c9" label="买盘" />
          <DealsHead>
            分时成交
            <Triangle $up $w={5} $h={6} $c="#666" />
          </DealsHead>
          <BookTable $h={323} aria-label="分时成交">
            <tbody>
              {deals.map(([time, price, dir, vol, t], i) => (
                <tr key={i}>
                  <DealTime>{time}</DealTime>
                  <DealPrice>{price}{dir && <Arrow up={dir === "up"} />}</DealPrice>
                  <DealVolume $tone={t}>{vol}</DealVolume>
                </tr>
              ))}
            </tbody>
          </BookTable>
          <Promo>
            <PromoLink href="#">开通L2查看大单</PromoLink>
            <PromoClose aria-label="关闭"><Cross size={12} /></PromoClose>
          </Promo>
        </Side>
      </Board>

      <Composer onSubmit={(e) => e.preventDefault()}>
        <RoundButton type="button" aria-label="弹幕设置"><NoteIcon /></RoundButton>
        <Field>
          <FieldInput placeholder="弹幕走一波..." aria-label="弹幕" />
          <SendButton>
            弹
            <SendMark width="14" height="14" viewBox="0 0 14 14">
              <circle cx="7" cy="7" r="7" fill={C.orange} stroke="#fff" />
              <path d="M3.800 7.200 6.200 9.500l4-4.700" fill="none" stroke="#fff" strokeWidth="1.600" />
            </SendMark>
          </SendButton>
        </Field>
      </Composer>

      <SectionHead>
        <IconButton aria-label="收起"><ChevronUp /></IconButton>
        <SectionTitle>个股异动</SectionTitle>
        <SeeAll href="#">查看全部<ChevronRight /></SeeAll>
      </SectionHead>
      <Filters>
        <Filter $on>全部</Filter>
        <Filter>自选股</Filter>
        <Filter>相关个股</Filter>
        <Filter>特变电工</Filter>
        <GearButton aria-label="异动设置"><CogIcon /></GearButton>
      </Filters>
      <MoversBox>
        <Movers>
          <tbody>
            <tr>
              <td>10:32:14</td>
              <td>梅雁吉祥</td>
              <td>有大卖盘</td>
              <td>153417手</td>
            </tr>
          </tbody>
        </Movers>
      </MoversBox>

      <TradeBar>
        <IndexBox>
          <Triangle $up $w={6} $h={6} $c="#555" />
          <IndexValue>4000.69</IndexValue>
          <IndexLine><Tinted $tone="mid">上证</Tinted>0.08%</IndexLine>
        </IndexBox>
        <TradeButtons>
          <TradeButton>买</TradeButton>
          <TradeButton $sell>卖</TradeButton>
        </TradeButtons>
        <Tool><ToolIcon>撤</ToolIcon>撤单</Tool>
        <Tool><ToolIcon><HexIcon /></ToolIcon>设自选</Tool>
        <Tool><ToolIcon><EllipsisIcon /></ToolIcon>更多</Tool>
      </TradeBar>
    </Page>
  );
}
